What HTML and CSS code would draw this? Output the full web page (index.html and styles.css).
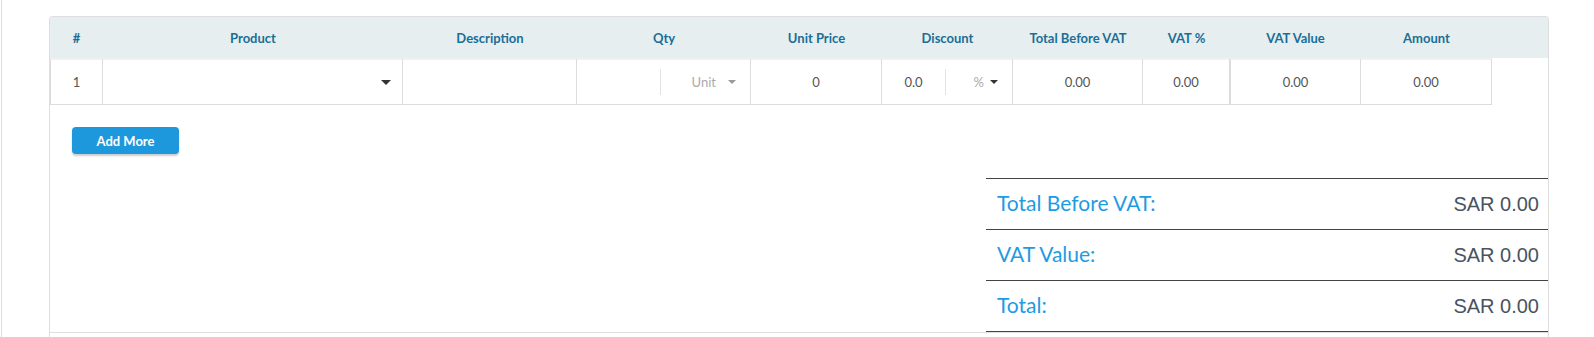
FILE: index.html
```html
<!DOCTYPE html>
<html lang="en">
<head>
    <meta charset="UTF-8">
    <meta name="viewport" content="width=device-width, initial-scale=1.0">
    <title>Invoice Items</title>
    <link rel="stylesheet" href="styles.css">
</head>
<body>
    <div class="page">
        <div class="card">
            <div class="items">
                <div class="items-head">
                    <div>#</div>
                    <div>Product</div>
                    <div>Description</div>
                    <div>Qty</div>
                    <div>Unit Price</div>
                    <div>Discount</div>
                    <div>Total Before VAT</div>
                    <div>VAT %</div>
                    <div>VAT Value</div>
                    <div>Amount</div>
                    <div></div>
                </div>
                <div class="items-row">
                    <div class="cell num">1</div>
                    <div class="cell product"><span class="caret"></span></div>
                    <div class="cell"></div>
                    <div class="cell split">
                        <span class="split-input"></span>
                        <span class="split-select qty-unit">Unit <span class="caret small light"></span></span>
                    </div>
                    <div class="cell">0</div>
                    <div class="cell split">
                        <span class="split-input">0.0</span>
                        <span class="split-select disc-type">% <span class="caret small"></span></span>
                    </div>
                    <div class="cell">0.00</div>
                    <div class="cell">0.00</div>
                    <div class="cell double">0.00</div>
                    <div class="cell">0.00</div>
                </div>
            </div>

            <div class="actions">
                <button class="btn-add">Add More</button>
            </div>

            <div class="totals">
                <div class="totals-row">
                    <span class="totals-label">Total Before VAT:</span>
                    <span class="totals-value">SAR 0.00</span>
                </div>
                <div class="totals-row">
                    <span class="totals-label">VAT Value:</span>
                    <span class="totals-value">SAR 0.00</span>
                </div>
                <div class="totals-row">
                    <span class="totals-label">Total:</span>
                    <span class="totals-value">SAR 0.00</span>
                </div>
            </div>

            <div class="card-foot"></div>
        </div>
    </div>
</body>
</html>
```

FILE: styles.css
```css
* {
    margin: 0;
    padding: 0;
    box-sizing: border-box;
}

html, body {
    overflow: hidden;
}

body {
    font-family: 'Lato', 'Open Sans', sans-serif;
    background: #fff;
    color: #555;
}

.page {
    margin-left: 1px;
    border-left: 1px solid #dcdcdc;
    min-height: 337px;
    padding-top: 16px;
}

.card {
    margin-left: 47px;
    width: 1500px;
    border: 1px solid #dedede;
    border-bottom: none;
    border-radius: 4px 4px 0 0;
}

/* item table */
.items {
    --cols: 53px 300px 174px 174px 131px 131px 130px 87px 131px 131px;
}

.items-head {
    display: grid;
    grid-template-columns: var(--cols) 1fr;
    height: 41px;
    align-items: center;
    background: #e7eef0;
    border-radius: 3px 3px 0 0;
    color: #1a6e98;
    font-weight: 700;
    font-size: 13px;
    text-align: center;
}

.items-row {
    display: grid;
    grid-template-columns: var(--cols);
    justify-content: start;
    font-size: 13px;
    color: #555;
}

.cell {
    height: 47px;
    border-top: 2px solid #eff2f3;
    border-right: 1px solid #dcdcdc;
    border-bottom: 1px solid #dcdcdc;
    display: flex;
    align-items: center;
    justify-content: center;
}

.cell.num {
    border-left: 1px solid #dcdcdc;
}

.cell.double {
    border-left: 1px solid #dcdcdc;
}

.cell.product {
    justify-content: flex-end;
    padding-right: 11px;
}

.cell.split {
    justify-content: stretch;
}

.split-input {
    flex: 1;
    height: 26px;
    border-right: 1px solid #e2e2e2;
    display: flex;
    align-items: center;
    justify-content: center;
}

.split-select {
    display: flex;
    align-items: center;
    justify-content: flex-end;
    color: #aaa;
    padding-right: 14px;
}

.qty-unit {
    width: 89px;
    gap: 12px;
}

.disc-type {
    width: 66px;
    gap: 6px;
}

.caret {
    width: 0;
    height: 0;
    border-left: 5px solid transparent;
    border-right: 5px solid transparent;
    border-top: 5px solid #333;
}

.caret.small {
    border-left-width: 4px;
    border-right-width: 4px;
    border-top-width: 4px;
}

.caret.light {
    border-top-color: #999;
}

/* add button */
.actions {
    padding: 22px 22px 0;
}

.btn-add {
    width: 107px;
    height: 27px;
    border: none;
    border-radius: 4px;
    background: #1e98dd;
    color: #fff;
    font-family: 'Lato', sans-serif;
    font-weight: 700;
    font-size: 13px;
    box-shadow: 0 2px 2px rgba(0, 0, 0, 0.2);
}

/* totals */
.totals {
    width: 562px;
    margin-left: auto;
    margin-top: 24px;
    border-top: 1px solid #444;
}

.totals-row {
    height: 51px;
    border-bottom: 1px solid #444;
    display: flex;
    align-items: center;
    justify-content: space-between;
    padding: 0 9px 0 11px;
}

.totals-label {
    color: #1e9be3;
    font-size: 21px;
    padding-bottom: 4px;
}

.totals-value {
    font-family: 'Liberation Sans', Arial, sans-serif;
    color: #4a5360;
    font-size: 20px;
}

.card-foot {
    border-top: 1px solid #dedede;
    height: 40px;
}
```
